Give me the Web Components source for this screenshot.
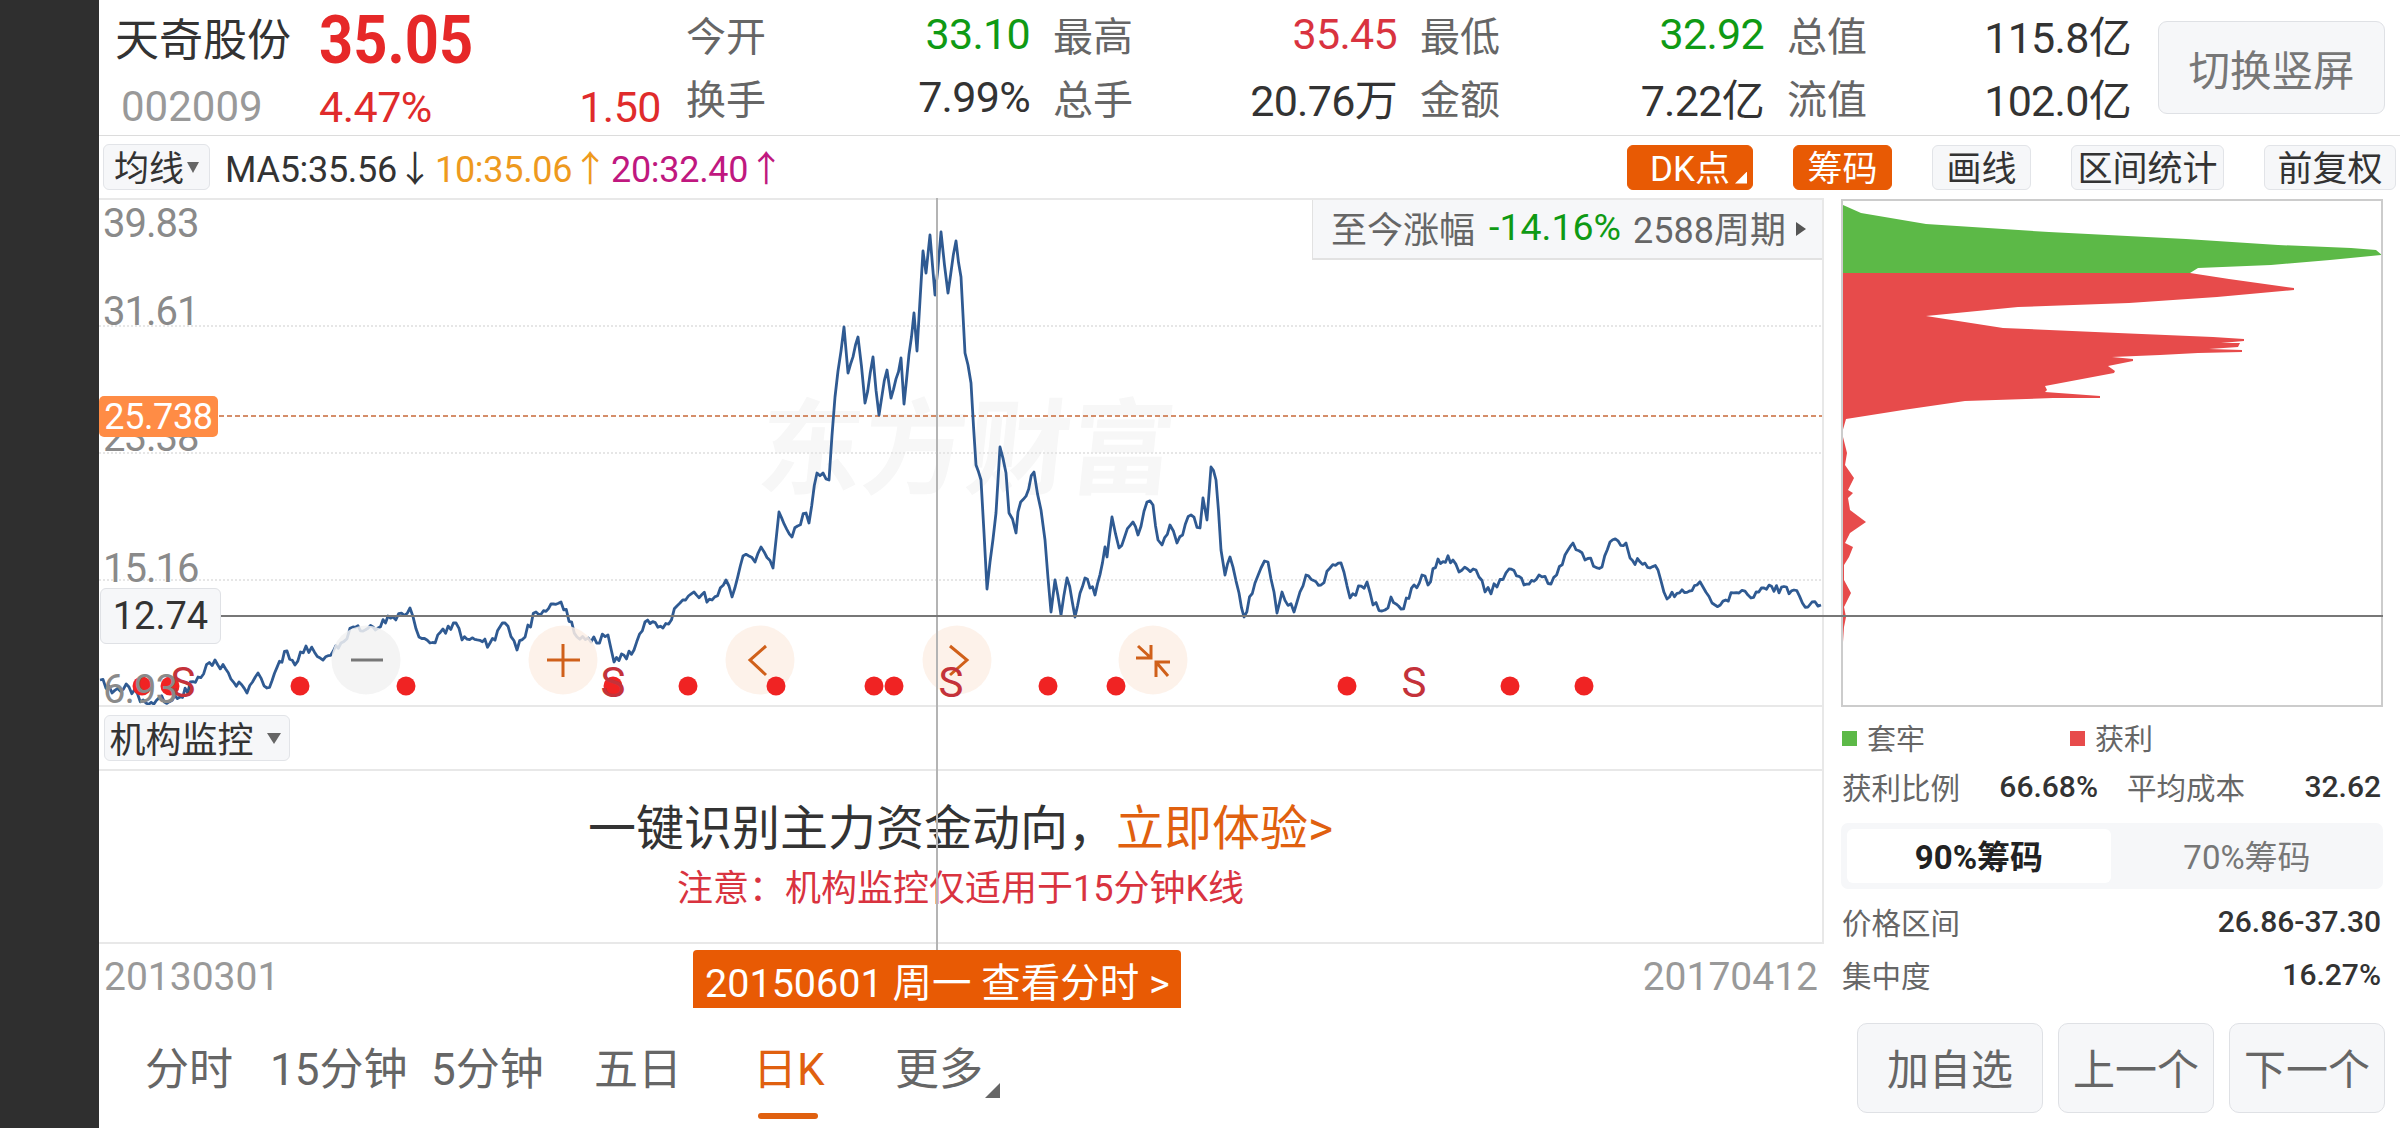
<!DOCTYPE html>
<html lang="zh">
<head>
<meta charset="utf-8">
<title>天奇股份</title>
<style>
  html, body { margin: 0; height: 100%; background: #fff; }
  body { font-family: Roboto, "Noto Sans CJK SC", sans-serif; overflow: hidden; }
</style>
</head>
<body>
<stock-app></stock-app>
<script>
/* one label + one value of the quote table */
class QuoteStat extends HTMLElement {
  constructor() {
    super();
    this.attachShadow({ mode: 'open' });
  }

  connectedCallback() {
    this.shadowRoot.innerHTML = `
      <style>
        :host { display: flex; justify-content: space-between; align-items: center; height: 62px; }
        .k { font-size: 40px; color: #666; }
        .v { font-size: 43px; letter-spacing: -.7px; color: var(--c, #333); }
      </style>
      <span class="k">${this.getAttribute('label')}</span>
      <span class="v"><slot></slot></span>`;
  }
}
customElements.define('quote-stat', QuoteStat);

class QuoteHeader extends HTMLElement {
  constructor() {
    super();
    this.attachShadow({ mode: 'open' });
  }

  connectedCallback() {
    this.shadowRoot.innerHTML = `
      <style>
        :host { display: flex; height: 135px; box-sizing: content-box; border-bottom: 1px solid #dcdcdc; }
        .left { width: 571px; padding: 5px 0 0 16px; flex: none; }
        .row { display: flex; align-items: center; height: 63px; }
        .row + .row { box-sizing: border-box; padding-top: 14px; }
        .name { width: 204px; font-size: 44px; color: #333; }
        .price { font-size: 67px; font-weight: 700; color: #e62828; padding-top: 6px; transform: scaleX(.89); transform-origin: left center; }
        .code { width: 198px; margin-left: 6px; font-size: 42px; color: #999; }
        .pct { width: 342px; display: flex; justify-content: space-between; font-size: 43px; letter-spacing: -.5px; color: #e02b2b; }
        .stats { display: grid; grid-template-columns: repeat(4, 344px); column-gap: 23px; padding-top: 3px; height: 126px; }
        .switch { box-sizing: border-box; width: 227px; height: 93px; margin: 21px 0 0 27px; display: flex; align-items: center; justify-content: center;
          font-size: 41.5px; color: #777; background: #f6f7f9; border: 1px solid #dfe1e5; border-radius: 9px; }
        quote-stat.red { --c: #d9333f; }
        quote-stat.green { --c: #0f9a14; }
      </style>
      <div class="left">
        <div class="row"><span class="name">天奇股份</span><span class="price">35.05</span></div>
        <div class="row"><span class="code">002009</span><span class="pct"><span>4.47%</span><span>1.50</span></span></div>
      </div>
      <div class="stats">
        <quote-stat label="今开" class="green">33.10</quote-stat>
        <quote-stat label="最高" class="red">35.45</quote-stat>
        <quote-stat label="最低" class="green">32.92</quote-stat>
        <quote-stat label="总值">115.8亿</quote-stat>
        <quote-stat label="换手">7.99%</quote-stat>
        <quote-stat label="总手">20.76万</quote-stat>
        <quote-stat label="金额">7.22亿</quote-stat>
        <quote-stat label="流值">102.0亿</quote-stat>
      </div>
      <div class="switch">切换竖屏</div>`;
  }
}
customElements.define('quote-header', QuoteHeader);

class ToolBtn extends HTMLElement {
  constructor() {
    super();
    this.attachShadow({ mode: 'open' });
  }

  connectedCallback() {
    this.shadowRoot.innerHTML = `
      <style>
        :host { box-sizing: border-box; display: flex; align-items: center; justify-content: center; position: relative; height: 45px; padding-bottom: 4px;
          font-size: 35px; color: #333; background: #f6f7f9; border: 1px solid #e2e4e8; border-radius: 6px; }
        :host([on]) { background: #e85a04; color: #fff; border-color: #e85a04; }
        .tri { position: absolute; right: 5px; bottom: 5px; width: 12px; height: 12px; background: #fff; clip-path: polygon(100% 0, 100% 100%, 0 100%); }
      </style>
      <slot></slot>
      ${this.hasAttribute('corner') ? '<i class="tri"></i>' : ''}`;
  }
}
customElements.define('tool-btn', ToolBtn);

class ChartToolbar extends HTMLElement {
  constructor() {
    super();
    this.attachShadow({ mode: 'open' });
  }

  connectedCallback() {
    this.shadowRoot.innerHTML = `
      <style>
        :host { display: flex; align-items: center; height: 62px; padding: 0 4px; }
        .ma { box-sizing: border-box; width: 107px; height: 46px; padding-bottom: 4px; display: flex; align-items: center; justify-content: center; gap: 3px;
          font-size: 35px; color: #333; background: #f6f7f9; border: 1px solid #e2e4e8; border-radius: 6px; }
        .ma i { width: 0; height: 0; margin-top: 4px; border: 6px solid transparent; border-top: 11px solid #666; border-bottom: 0; }
        .line { display: flex; font-size: 36px; letter-spacing: -.3px; margin-left: 15px; padding-bottom: 3px; }
        .line span { width: 176px; white-space: nowrap; }
        .line span:first-child { width: 210px; color: #333; }
        .o { color: #ee9a1e; }
        .m { color: #c0187f; }
        .tools { margin-left: auto; display: flex; gap: 40px; }
      </style>
      <div class="ma">均线<i></i></div>
      <div class="line"><span>MA5:35.56↓</span><span class="o">10:35.06↑</span><span class="m">20:32.40↑</span></div>
      <div class="tools">
        <tool-btn on corner style="width:126px">DK点</tool-btn>
        <tool-btn on style="width:99px">筹码</tool-btn>
        <tool-btn style="width:99px">画线</tool-btn>
        <tool-btn style="width:153px">区间统计</tool-btn>
        <tool-btn style="width:132px">前复权</tool-btn>
      </div>`;
  }
}
customElements.define('chart-toolbar', ChartToolbar);

/* hand traced from the daily close, page coordinates */
const CLOSE = [[100,680],[112,693],[129,687],[146,703],[180,697],[198,677],[215,660],[247,693],[258,673],[267,688],[287,651],[295,665],[306,646],[323,660],[341,643],[353,627],[373,627],[393,617],[410,608],[419,637],[430,643],[456,623],[462,640],[490,643],[505,623],[517,650],[536,612],[561,602],[577,637],[591,642],[608,635],[614,662],[634,650],[645,622],[663,628],[680,603],[694,592],[712,600],[726,580],[732,597],[743,556],[755,562],[761,547],[773,568],[779,512],[792,537],[806,513],[809,523],[817,473],[823,473],[829,480],[835,397],[844,327],[848,373],[858,337],[865,403],[873,357],[879,415],[887,370],[891,398],[901,358],[904,404],[914,313],[917,351],[923,251],[926,273],[930,235],[935,295],[941,232],[948,293],[956,241],[961,277],[965,353],[968,365],[971,383],[976,465],[981,480],[987,589],[996,513],[1000,447],[1006,473],[1009,513],[1016,533],[1018,512],[1034,472],[1041,510],[1045,540],[1051,612],[1055,580],[1061,615],[1067,578],[1075,617],[1085,578],[1095,595],[1105,547],[1107,557],[1112,517],[1119,548],[1133,522],[1138,535],[1147,502],[1153,505],[1158,540],[1162,545],[1170,525],[1177,543],[1191,515],[1200,528],[1203,498],[1207,520],[1211,467],[1216,480],[1221,550],[1225,575],[1230,557],[1239,593],[1244,617],[1255,583],[1261,568],[1268,562],[1274,592],[1277,613],[1282,592],[1294,612],[1297,602],[1306,575],[1321,585],[1330,568],[1341,563],[1350,598],[1367,582],[1373,605],[1385,610],[1391,597],[1401,609],[1422,575],[1428,585],[1438,559],[1453,560],[1459,572],[1476,570],[1485,592],[1497,587],[1509,569],[1524,585],[1539,575],[1551,584],[1565,555],[1573,543],[1585,560],[1602,567],[1610,542],[1626,543],[1630,558],[1650,568],[1658,570],[1667,599],[1697,585],[1703,587],[1715,605],[1739,593],[1751,598],[1764,588],[1794,590],[1808,607],[1812,602],[1821,605]];
const DOTS = [142,170,300,406,613,688,776,874,894,1048,1116,1347,1510,1584];
const SIGNS = [183,613,951,1414];

function noisyLine(points) {
  let seed = 20150601;
  const rnd = () => {
    seed = (Math.imul(seed, 1103515245) + 12345) & 0x7fffffff;
    return (seed >> 8) / 0x7fffff - 0.5;
  };
  const out = [];
  for (let i = 0; i < points.length - 1; i++) {
    const [x0, y0] = points[i];
    const [x1, y1] = points[i + 1];
    out.push(`${x0},${y0}`);
    const n = Math.floor((x1 - x0) / 2.5);
    for (let j = 1; j < n; j++) {
      const t = j / n;
      out.push(`${(x0 + (x1 - x0) * t).toFixed(1)},${(y0 + (y1 - y0) * t + rnd() * 9).toFixed(1)}`);
    }
  }
  out.push(points[points.length - 1].join(','));
  return out.join(' ');
}

class KlineChart extends HTMLElement {
  constructor() {
    super();
    this.attachShadow({ mode: 'open' });
  }

  connectedCallback() {
    const fabs = [
      [366, '#f2f2f2', '<path d="M351 660H383" stroke="#777" stroke-width="3"/>'],
      [563, '#fdf0e6', '<path d="M547 660H580M563 644V677" stroke="#d0601a" stroke-width="3"/>'],
      [760, '#fdf0e6', '<path d="M766 646L750 660L766 675" stroke="#d0601a" stroke-width="3" fill="none"/>'],
      [957, '#fdf0e6', '<path d="M950 646L967 660L950 675" stroke="#d0601a" stroke-width="3" fill="none"/>'],
      [1153, '#fdf0e6', '<path d="M1136 658H1151V645M1151 658L1138 646M1170 662H1156V677M1156 662L1168 676" stroke="#d0601a" stroke-width="3" fill="none"/>']
    ];
    this.shadowRoot.innerHTML = `
      <style>
        :host { display: block; position: relative; box-sizing: border-box; height: 509px; border-top: 2px solid #e8e8e8; border-bottom: 2px solid #e8e8e8; border-right: 2px solid #e8e8e8; overflow: hidden; }
        svg { position: absolute; left: 0; top: 0; display: block; }
        .wm { position: absolute; left: 660px; top: 196px; font-size: 104px; line-height: 110px; font-weight: 700; color: #f7f7f7; white-space: nowrap; transform: skewX(-6deg); }
        .axis { position: absolute; left: 4px; font-size: 40px; letter-spacing: -1px; line-height: 44px; color: #8a8a8a; }
        .axis.low { top: 474px; line-height: 31px; }
        .tag { position: absolute; left: 0; top: 196px; box-sizing: border-box; width: 119px; height: 41px; display: flex; align-items: center; justify-content: center;
          font-size: 36px; letter-spacing: -.4px; color: #fff; background: #ff8c45; border-radius: 5px; }
        .cur { position: absolute; left: 1px; top: 388px; box-sizing: border-box; width: 121px; height: 56px; display: flex; align-items: center; justify-content: center;
          font-size: 38px; color: #333; background: #f6f7f9; border: 1px solid #dfe1e5; border-radius: 6px; }
        .s { position: absolute; top: 461px; width: 30px; text-align: center; font-size: 42px; line-height: 44px; color: #c4323a; }
        .since { position: absolute; right: 0; top: 0; box-sizing: border-box; width: 510px; height: 60px; padding: 0 0 4px 18px; display: flex; align-items: center;
          font-size: 36px; color: #666; background: #f6f7f9; border-left: 1px solid #e2e2e2; border-bottom: 2px solid #e2e2e2; white-space: nowrap; }
        .since b { font-weight: 400; font-size: 37.5px; color: #0f9a14; margin: 0 12px 0 14px; }
        .since i { margin: 4px 0 0 10px; border: 7px solid transparent; border-left: 10px solid #555; border-right: 0; }
      </style>
      <div class="wm">东方财富</div>
      <svg width="1723" height="505" viewBox="99 200 1723 505">
        <g stroke="#e6e6e6" stroke-width="2" stroke-dasharray="2 2">
          <path d="M99 326H1822M99 453H1822M99 580H1822"/>
        </g>
        <path d="M99 416H1822" stroke="#c86a3a" stroke-width="1.5" stroke-dasharray="5 3"/>
        <polyline points="${noisyLine(CLOSE)}" fill="none" stroke="#2f5a92" stroke-width="2.8" stroke-linejoin="round"/>
        ${fabs.map(f => `<circle cx="${f[0]}" cy="660" r="34.5" fill="${f[1]}" fill-opacity=".85"/>${f[2]}`).join('')}
        ${DOTS.map(x => `<circle cx="${x}" cy="686" r="9.5" fill="#f02323"/>`).join('')}
      </svg>
      ${SIGNS.map(x => `<span class="s" style="left:${x - 114}px">S</span>`).join('')}
      <span class="axis" style="top:2px">39.83</span>
      <span class="axis" style="top:90px">31.61</span>
      <span class="axis" style="top:216px">23.38</span>
      <span class="axis" style="top:347px">15.16</span>
      <span class="axis low">6.93</span>
      <span class="tag">25.738</span>
      <span class="cur">12.74</span>
      <div class="since">至今涨幅<b>-14.16%</b>2588周期<i></i></div>`;
  }
}
customElements.define('kline-chart', KlineChart);

class MonitorPanel extends HTMLElement {
  constructor() {
    super();
    this.attachShadow({ mode: 'open' });
  }

  connectedCallback() {
    this.shadowRoot.innerHTML = `
      <style>
        :host { display: block; }
        .bar { box-sizing: border-box; height: 64px; padding: 8px 0 0 5px; border-bottom: 2px solid #e8e8e8; border-right: 2px solid #e8e8e8; }
        .sel { box-sizing: border-box; width: 186px; height: 46px; padding: 0 4px 3px 0; display: flex; align-items: center; justify-content: center; gap: 13px; white-space: nowrap;
          font-size: 36px; color: #333; background: #f6f7f9; border: 1px solid #e2e4e8; border-radius: 6px; }
        .sel i { margin-top: 4px; border: 7px solid transparent; border-top: 11px solid #666; border-bottom: 0; }
        .tip { box-sizing: border-box; height: 173px; padding-top: 30px; border-bottom: 2px solid #e8e8e8; border-right: 2px solid #e8e8e8; display: flex; flex-direction: column; align-items: center; }
        .big { font-size: 48px; line-height: 56px; color: #333; white-space: nowrap; }
        .big em { font-style: normal; color: #e0600f; }
        .warn { font-size: 36px; line-height: 42px; margin-top: 11px; color: #d9333f; white-space: nowrap; }
      </style>
      <div class="bar"><div class="sel">机构监控<i></i></div></div>
      <div class="tip">
        <div class="big">一键识别主力资金动向，<em>立即体验&gt;</em></div>
        <div class="warn">注意：机构监控仅适用于15分钟K线</div>
      </div>`;
  }
}
customElements.define('monitor-panel', MonitorPanel);

class DateRow extends HTMLElement {
  constructor() {
    super();
    this.attachShadow({ mode: 'open' });
  }

  connectedCallback() {
    this.shadowRoot.innerHTML = `
      <style>
        :host { display: flex; align-items: center; height: 66px; padding: 0 6px 0 5px; font-size: 39px; color: #999; }
        .tag { box-sizing: border-box; flex: none; align-self: flex-start; width: 488px; height: 58px; margin: 6px 0 0 414px; display: flex; align-items: center; justify-content: center;
          font-size: 39.5px; color: #fff; background: #e85a04; border-radius: 4px 4px 0 0; white-space: nowrap; }
        .end { margin-left: auto; }
      </style>
      <span>20130301</span>
      <div class="tag">20150601 周一 查看分时 &gt;</div>
      <span class="end">20170412</span>`;
  }
}
customElements.define('date-row', DateRow);

class PeriodTabs extends HTMLElement {
  constructor() {
    super();
    this.attachShadow({ mode: 'open' });
  }

  connectedCallback() {
    this.shadowRoot.innerHTML = `
      <style>
        :host { display: grid; grid-template-columns: 125px 161px 163px 159px 142px auto; height: 118px; box-sizing: border-box; padding: 30px 0 0 46px; font-size: 44px; color: #666; }
        div { line-height: 60px; white-space: nowrap; }
        .on { color: #e0600f; }
        .on::after { content: ""; display: block; width: 60px; height: 6px; margin: 13px 0 0 5px; border-radius: 3px; background: #e0600f; }
        .more { display: flex; align-items: flex-end; height: 60px; }
        .more i { width: 15px; height: 15px; margin: 0 0 2px 2px; background: #666; clip-path: polygon(100% 0, 100% 100%, 0 100%); }
      </style>
      <div>分时</div><div>15分钟</div><div>5分钟</div><div>五日</div><div class="on">日K</div>
      <div class="more">更多<i></i></div>`;
  }
}
customElements.define('period-tabs', PeriodTabs);

/* chip distribution, page coordinates */
const GREEN = [[1841,204],[1861,213],[1926,224],[2049,232],[2186,239],[2278,245],[2351,248],[2376,250],[2382,255],[2330,260],[2271,265],[2198,268],[2190,273],[1841,273]];
const RED = [[1841,273],[2190,273],[2229,279],[2294,288],[2294,290],[2217,297],[2129,303],[2018,307],[1926,316],[2003,328],[2118,333],[2213,337],[2244,339],[2244,341],[2221,343],[2240,343],[2238,347],[2209,349],[2242,350],[2242,352],[2198,353],[2160,355],[2112,357],[2133,359],[2133,361],[2108,366],[2115,371],[2114,373],[2045,386],[2047,390],[2045,392],[2100,396],[2100,398],[2053,398],[1965,401],[1903,410],[1846,419],[1842,433],[1847,453],[1845,465],[1854,478],[1848,490],[1853,493],[1848,498],[1850,510],[1866,522],[1850,533],[1845,543],[1853,547],[1849,557],[1844,565],[1844,580],[1851,593],[1844,607],[1846,617],[1844,627],[1843,642],[1841,643]];

class ChipRow extends HTMLElement {
  constructor() {
    super();
    this.attachShadow({ mode: 'open' });
  }

  connectedCallback() {
    this.shadowRoot.innerHTML = `
      <style>
        :host { display: flex; justify-content: space-between; align-items: center; height: 36px; font-size: 29.5px; color: #666; white-space: nowrap; }
        b { font-weight: 500; font-size: 30px; color: #333; }
      </style>
      <span>${this.getAttribute('label')}</span><b><slot></slot></b>`;
  }
}
customElements.define('chip-row', ChipRow);

class ChipPanel extends HTMLElement {
  constructor() {
    super();
    this.attachShadow({ mode: 'open' });
  }

  connectedCallback() {
    this.shadowRoot.innerHTML = `
      <style>
        :host { display: block; padding: 1px 17px 0 17px; }
        .box { box-sizing: border-box; height: 508px; border: 2px solid #ccc; overflow: hidden; }
        .box svg { display: block; }
        .legend { box-sizing: border-box; display: grid; grid-template-columns: 228px 1fr; height: 61px; padding: 0 0 2px 1px; align-items: center; font-size: 29px; color: #666; }
        .legend span { display: flex; align-items: center; gap: 10px; }
        .legend i { width: 15px; height: 15px; margin-top: 3px; }
        .pair { display: grid; grid-template-columns: 256px 1fr; column-gap: 29px; padding: 0 2px 0 1px; }
        .seg { box-sizing: border-box; height: 66px; margin-top: 19px; padding: 6px 0 6px 6px; display: grid; grid-template-columns: 264px 1fr; background: #f6f7f9; border-radius: 7px; font-size: 33px; color: #777; }
        .seg div { display: flex; align-items: center; justify-content: center; padding-bottom: 3px; }
        .seg .on { background: #fff; border-radius: 6px; color: #222; font-weight: 700; }
        .line { padding: 0 2px 0 1px; margin-top: 17px; }
        .line.first { margin-top: 14px; }
        .acts { display: flex; justify-content: flex-end; gap: 15px; margin: 31px -2px 0 0; }
        .acts div { box-sizing: border-box; height: 90px; padding-bottom: 4px; display: flex; align-items: center; justify-content: center; font-size: 42px; color: #666; background: #f6f7f9; border: 1px solid #dfe1e5; border-radius: 10px; }
      </style>
      <div class="box">
        <svg width="538" height="504" viewBox="1843 201 538 504">
          <polygon points="${GREEN.join(' ')}" fill="#5cb947"/>
          <polygon points="${RED.join(' ')}" fill="#e74b4b"/>
        </svg>
      </div>
      <div class="legend">
        <span><i style="background:#5cb947"></i>套牢</span>
        <span><i style="background:#e74b4b"></i>获利</span>
      </div>
      <div class="pair">
        <chip-row label="获利比例">66.68%</chip-row>
        <chip-row label="平均成本">32.62</chip-row>
      </div>
      <div class="seg"><div class="on">90%筹码</div><div>70%筹码</div></div>
      <div class="line first"><chip-row label="价格区间">26.86-37.30</chip-row></div>
      <div class="line"><chip-row label="集中度">16.27%</chip-row></div>
      <div class="acts">
        <div style="width:186px">加自选</div>
        <div style="width:156px">上一个</div>
        <div style="width:156px">下一个</div>
      </div>`;
  }
}
customElements.define('chip-panel', ChipPanel);

class StockApp extends HTMLElement {
  constructor() {
    super();
    this.attachShadow({ mode: 'open' });
  }

  connectedCallback() {
    this.shadowRoot.innerHTML = `
      <style>
        :host { display: grid; grid-template-columns: 99px 1fr; width: 2400px; height: 1128px; position: relative; overflow: hidden; }
        .rail { background: #2f2f2f; }
        .main { min-width: 0; }
        .body { display: grid; grid-template-columns: 1725px 1fr; }
        .vline { position: absolute; left: 936px; top: 198px; width: 2px; height: 752px; background: #b4b4b4; }
        .hline { position: absolute; left: 221px; top: 615px; width: 2162px; height: 2px; background: #777; }
      </style>
      <div class="rail"></div>
      <div class="main">
        <quote-header></quote-header>
        <chart-toolbar></chart-toolbar>
        <div class="body">
          <div>
            <kline-chart></kline-chart>
            <monitor-panel></monitor-panel>
            <date-row></date-row>
            <period-tabs></period-tabs>
          </div>
          <chip-panel></chip-panel>
        </div>
      </div>
      <i class="vline"></i>
      <i class="hline"></i>`;
  }
}
customElements.define('stock-app', StockApp);
</script>
</body>
</html>
